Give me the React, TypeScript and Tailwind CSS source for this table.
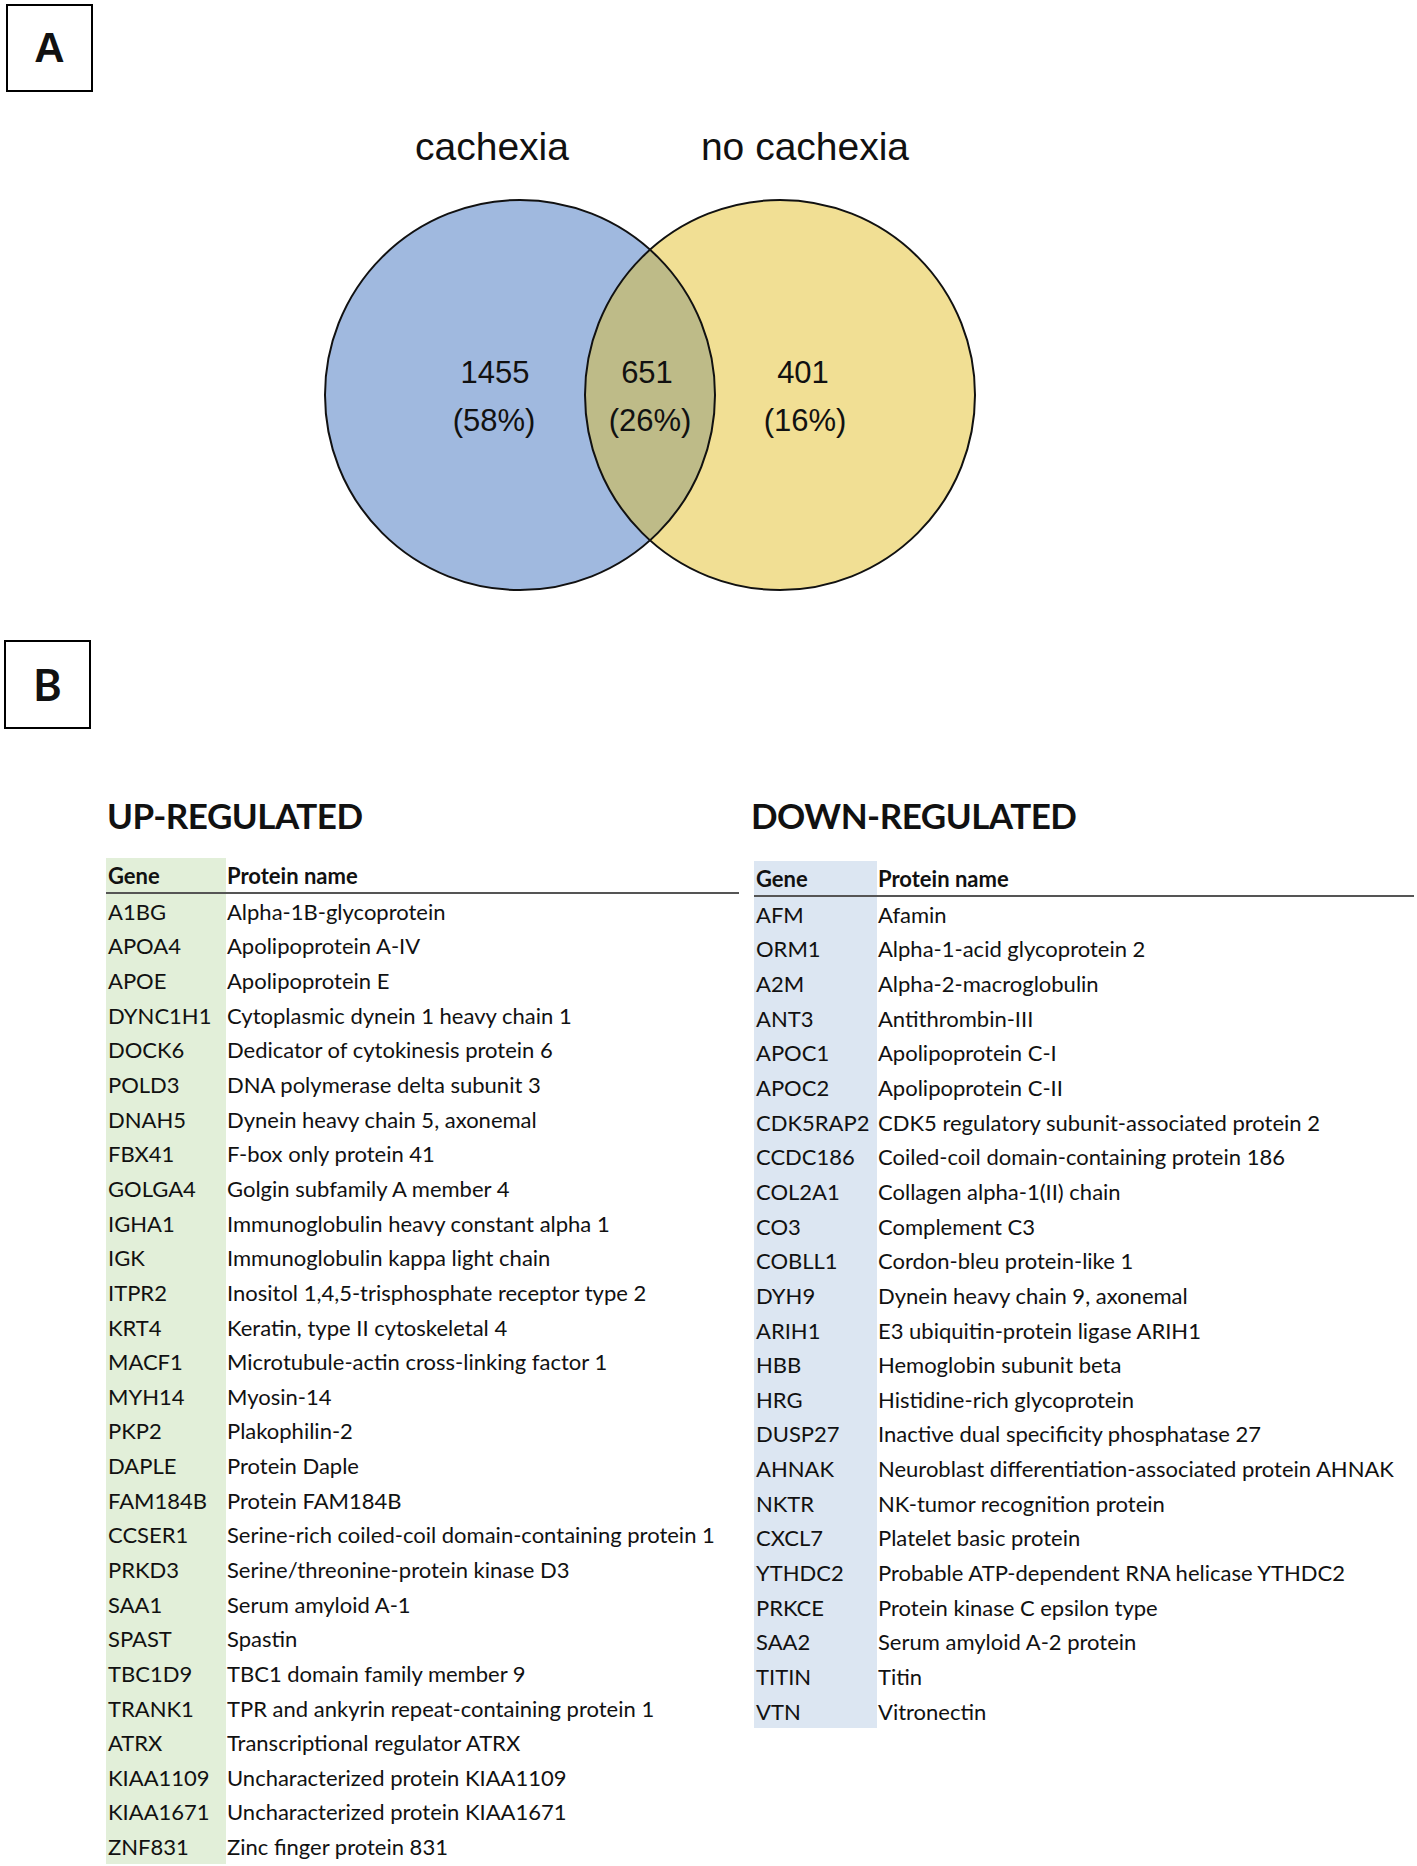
import React from "react";

type Row = { gene: string; name: string };

const UP: Row[] = [
  { gene: "A1BG", name: "Alpha-1B-glycoprotein" },
  { gene: "APOA4", name: "Apolipoprotein A-IV" },
  { gene: "APOE", name: "Apolipoprotein E" },
  { gene: "DYNC1H1", name: "Cytoplasmic dynein 1 heavy chain 1" },
  { gene: "DOCK6", name: "Dedicator of cytokinesis protein 6" },
  { gene: "POLD3", name: "DNA polymerase delta subunit 3" },
  { gene: "DNAH5", name: "Dynein heavy chain 5, axonemal" },
  { gene: "FBX41", name: "F-box only protein 41" },
  { gene: "GOLGA4", name: "Golgin subfamily A member 4" },
  { gene: "IGHA1", name: "Immunoglobulin heavy constant alpha 1" },
  { gene: "IGK", name: "Immunoglobulin kappa light chain" },
  { gene: "ITPR2", name: "Inositol 1,4,5-trisphosphate receptor type 2" },
  { gene: "KRT4", name: "Keratin, type II cytoskeletal 4" },
  { gene: "MACF1", name: "Microtubule-actin cross-linking factor 1" },
  { gene: "MYH14", name: "Myosin-14" },
  { gene: "PKP2", name: "Plakophilin-2" },
  { gene: "DAPLE", name: "Protein Daple" },
  { gene: "FAM184B", name: "Protein FAM184B" },
  { gene: "CCSER1", name: "Serine-rich coiled-coil domain-containing protein 1" },
  { gene: "PRKD3", name: "Serine/threonine-protein kinase D3" },
  { gene: "SAA1", name: "Serum amyloid A-1" },
  { gene: "SPAST", name: "Spastin" },
  { gene: "TBC1D9", name: "TBC1 domain family member 9" },
  { gene: "TRANK1", name: "TPR and ankyrin repeat-containing protein 1" },
  { gene: "ATRX", name: "Transcriptional regulator ATRX" },
  { gene: "KIAA1109", name: "Uncharacterized protein KIAA1109" },
  { gene: "KIAA1671", name: "Uncharacterized protein KIAA1671" },
  { gene: "ZNF831", name: "Zinc finger protein 831" },
];

const DOWN: Row[] = [
  { gene: "AFM", name: "Afamin" },
  { gene: "ORM1", name: "Alpha-1-acid glycoprotein 2" },
  { gene: "A2M", name: "Alpha-2-macroglobulin" },
  { gene: "ANT3", name: "Antithrombin-III" },
  { gene: "APOC1", name: "Apolipoprotein C-I" },
  { gene: "APOC2", name: "Apolipoprotein C-II" },
  { gene: "CDK5RAP2", name: "CDK5 regulatory subunit-associated protein 2" },
  { gene: "CCDC186", name: "Coiled-coil domain-containing protein 186" },
  { gene: "COL2A1", name: "Collagen alpha-1(II) chain" },
  { gene: "CO3", name: "Complement C3" },
  { gene: "COBLL1", name: "Cordon-bleu protein-like 1" },
  { gene: "DYH9", name: "Dynein heavy chain 9, axonemal" },
  { gene: "ARIH1", name: "E3 ubiquitin-protein ligase ARIH1" },
  { gene: "HBB", name: "Hemoglobin subunit beta" },
  { gene: "HRG", name: "Histidine-rich glycoprotein" },
  { gene: "DUSP27", name: "Inactive dual specificity phosphatase 27" },
  { gene: "AHNAK", name: "Neuroblast differentiation-associated protein AHNAK" },
  { gene: "NKTR", name: "NK-tumor recognition protein" },
  { gene: "CXCL7", name: "Platelet basic protein" },
  { gene: "YTHDC2", name: "Probable ATP-dependent RNA helicase YTHDC2" },
  { gene: "PRKCE", name: "Protein kinase C epsilon type" },
  { gene: "SAA2", name: "Serum amyloid A-2 protein" },
  { gene: "TITIN", name: "Titin" },
  { gene: "VTN", name: "Vitronectin" },
];

function Venn() {
  const blue = "#a0b9df";
  const yellow = "#f1df94";
  const mix = "#bebb88";
  return (
    <svg width="1417" height="500" viewBox="0 0 1417 500" className="block">
      <defs>
        <clipPath id="leftClip">
          <circle cx="520" cy="295" r="195" />
        </clipPath>
      </defs>
      <circle cx="520" cy="295" r="195" fill={blue} />
      <circle cx="780" cy="295" r="195" fill={yellow} />
      <circle cx="780" cy="295" r="195" fill={mix} clipPath="url(#leftClip)" />
      <circle cx="520" cy="295" r="195" fill="none" stroke="#111" strokeWidth="2" />
      <circle cx="780" cy="295" r="195" fill="none" stroke="#111" strokeWidth="2" />
      <g fontFamily="'Liberation Sans', Arial, sans-serif" fill="#111" textAnchor="middle">
        <text x="492" y="60" fontSize="39">cachexia</text>
        <text x="805" y="60" fontSize="39">no cachexia</text>
        <text x="495" y="283" fontSize="31">1455</text>
        <text x="494" y="331" fontSize="31">(58%)</text>
        <text x="647" y="283" fontSize="31">651</text>
        <text x="650" y="331" fontSize="31">(26%)</text>
        <text x="803" y="283" fontSize="31">401</text>
        <text x="805" y="331" fontSize="31">(16%)</text>
      </g>
    </svg>
  );
}

function GeneTable({
  rows,
  tint,
  geneW,
}: {
  rows: Row[];
  tint: string;
  geneW: string;
}) {
  return (
    <div className="flex flex-col">
      <div className="flex h-[36px] items-center font-bold border-b-2 border-[#555]">
        <div className={`${geneW} ${tint} h-full flex items-center pl-[2px]`}>Gene</div>
        <div className="pl-[1px]">Protein name</div>
      </div>
      {rows.map((r) => (
        <div key={r.gene} className="flex h-[34.65px] items-center">
          <div className={`${geneW} ${tint} h-full flex items-center pl-[2px]`}>{r.gene}</div>
          <div className="pl-[1px] whitespace-nowrap">{r.name}</div>
        </div>
      ))}
    </div>
  );
}

export default function App() {
  return (
    <div className="w-[1417px] h-[1866px] bg-white text-[#111] overflow-hidden">
      <section>
        <div className="ml-[6px] mt-[4px] w-[87px] h-[88px] border-2 border-black flex items-center justify-center font-['Liberation_Sans',Arial,sans-serif] font-bold text-[42px] leading-none">
          A
        </div>
        <div className="mt-[8px]">
          <Venn />
        </div>
      </section>

      <section className="font-['Lato','Noto_Sans',sans-serif]">
        <div className="ml-[4px] mt-[40px] w-[87px] h-[89px] border-2 border-black flex items-center justify-center font-bold text-[43px] leading-none">
          B
        </div>
        <div className="flex mt-[66px] text-[22px]">
          <div className="ml-[106px] w-[633px]">
            <h2 className="ml-[1px] font-bold text-[35px] leading-[40px] tracking-[-0.5px]">UP-REGULATED</h2>
            <div className="mt-[23px]">
              <GeneTable rows={UP} tint="bg-[#e2efd9]" geneW="w-[120px]" />
            </div>
          </div>
          <div className="ml-[12px] w-[663px]">
            <h2 className="font-bold text-[35px] leading-[40px] tracking-[-0.5px]">DOWN-REGULATED</h2>
            <div className="mt-[26px] ml-[3px]">
              <GeneTable rows={DOWN} tint="bg-[#dce6f2]" geneW="w-[123px]" />
            </div>
          </div>
        </div>
      </section>
    </div>
  );
}
